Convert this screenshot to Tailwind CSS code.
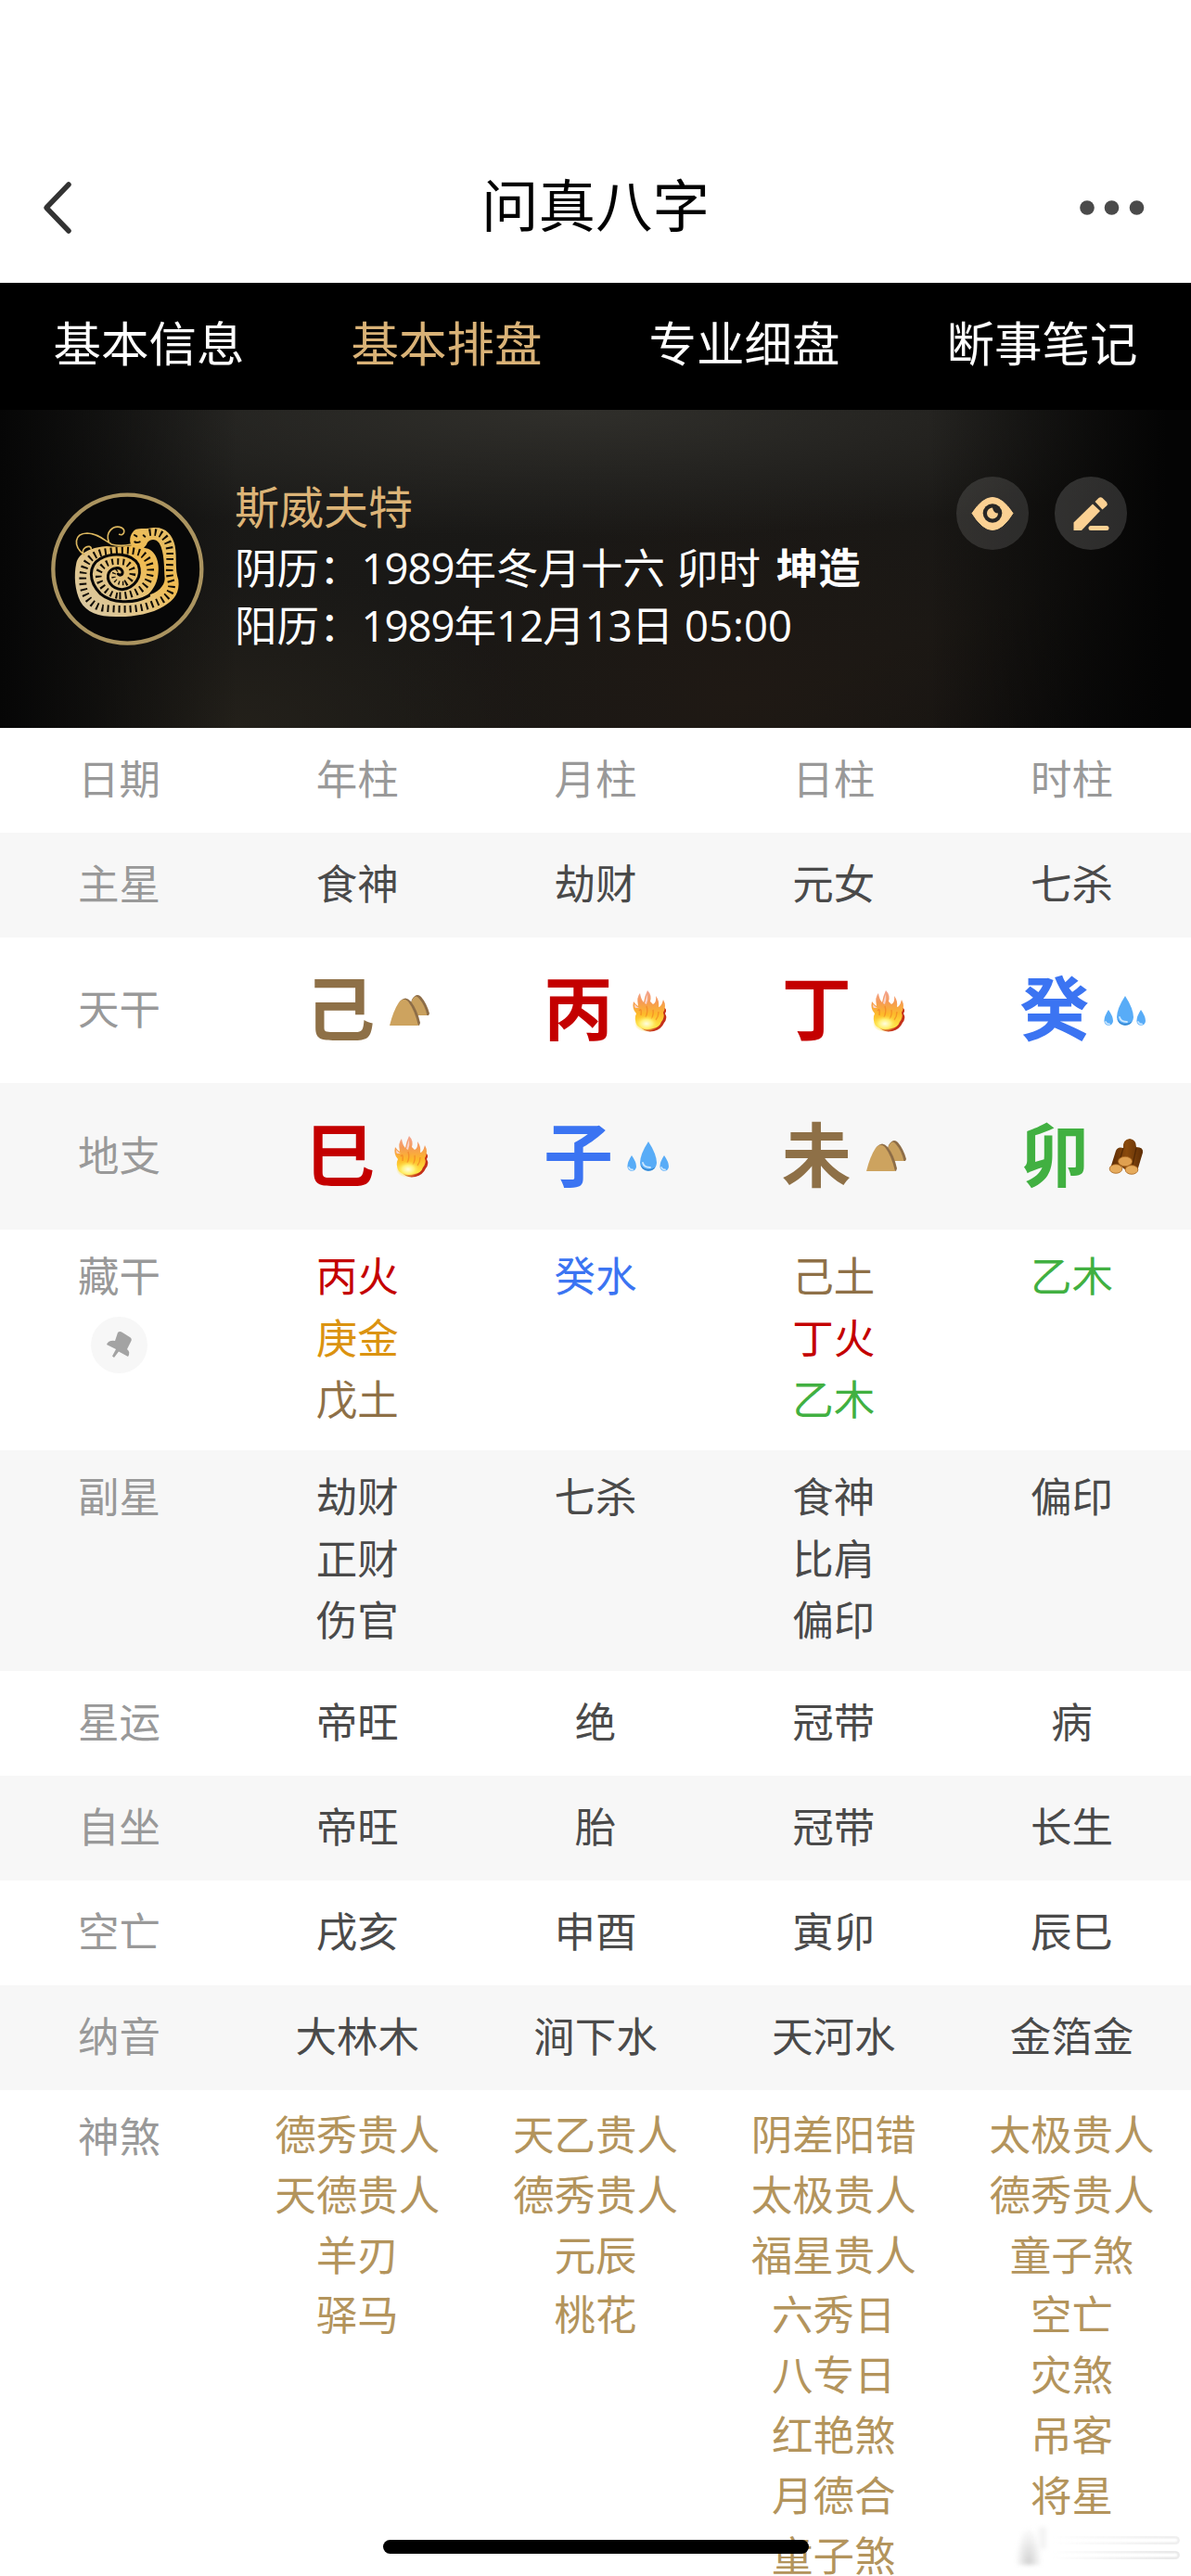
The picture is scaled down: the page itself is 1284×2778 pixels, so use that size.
<!DOCTYPE html>
<html lang="zh-CN">
<head>
  <meta charset="UTF-8" />
  <meta name="viewport" content="width=device-width, initial-scale=1.0" />
  <title>问真八字</title>
  <script src="https://cdn.jsdelivr.net/npm/@tailwindcss/browser@4"></script>
</head>
<body class="bg-white">
  <!-- shared icons -->
  <svg class="absolute w-0 h-0">
    <defs>
      <linearGradient id="flame" x1="0" y1="0" x2="0" y2="1">
        <stop offset="0" stop-color="#f3a596" />
        <stop offset="0.3" stop-color="#f59a55" />
        <stop offset="0.6" stop-color="#fdb92a" />
        <stop offset="1" stop-color="#fff04a" />
      </linearGradient>
      <radialGradient id="glow">
        <stop offset="0" stop-color="#fffde0" />
        <stop offset="0.5" stop-color="#fff27a" />
        <stop offset="1" stop-color="#ffd83a" stop-opacity="0" />
      </radialGradient>
      <linearGradient id="bark" x1="0" y1="0" x2="1" y2="0">
        <stop offset="0" stop-color="#5a2b05" />
        <stop offset="0.5" stop-color="#8a4a0c" />
        <stop offset="1" stop-color="#5e2e06" />
      </linearGradient>
      <symbol id="earth" viewBox="0 0 48 48">
        <path d="M22 29L26 12Q31 4 36 9Q42 16 45 27L44 29Z" fill="#8d6d47" />
        <path d="M22 29L26 13Q30 5 34 11Q40 18 42.500 29Z" fill="#c8a05e" />
        <path d="M8 30L13 14Q19 7 25 14Q32 23 35 37L34 40Z" fill="#8d6d47" />
        <path d="M2 40Q6 24 12 15Q17 9 22 14Q29 23 33 40Z" fill="#cda35f" />
      </symbol>
      <symbol id="fire" viewBox="0 0 48 48">
        <path d="M15 41Q11 38 12 33L40 20Q45 22 42 27Q45 32 41 37Q38 44 30 46Q20 48 15 41Z" fill="#c4301a" />
        <path d="M12 40Q8 33 11 27Q6 22 8 14Q10 17 13 19Q11 9 15 5Q16 12 19 15Q20 8 23 2Q28 7 26 14L29 17Q33 15 32 8Q36 13 35 20Q38 20 40 12Q44 19 40 26Q42 31 38 36Q36 42 29 43Q19 46 12 40Z" fill="url(#flame)" />
        <path d="M14 24Q17 20 16 29M22 19Q24 25 21 31M29 23Q30 28 27 33M35 25Q35 30 32 34" fill="none" stroke="#f07a22" stroke-width="1.4" opacity="0.6" />
        <ellipse cx="22" cy="38" rx="13" ry="9" fill="url(#glow)" />
        <path d="M20 16Q21 11 23 6Q24 12 22 17ZM10 21Q9 20 9 17Q12 20 14 21Z" fill="#f9d3cb" />
      </symbol>
      <symbol id="water" viewBox="0 0 48 48">
        <path d="M24 8Q33 22 33 31A9 9 0 0 1 15 31Q15 22 24 8Z" fill="#58acf7" />
        <path d="M6 23Q11 30 11 35A4.8 4.8 0 0 1 1.4 35Q1.4 30 6 23Z" fill="#58acf7" />
        <path d="M41 23Q46 30 46 35A4.8 4.8 0 0 1 36.4 35Q36.4 30 41 23Z" fill="#58acf7" />
        <path d="M15.5 33A9 9 0 0 0 32 35Q29 38 24 38T15.5 33Z" fill="#3687cf" />
        <path d="M18 31Q19 36 26 36M3 36Q4 38.4 7 38.4M38 36Q39 38.4 42 38.4" fill="none" stroke="#c9e6ff" stroke-width="1.8" stroke-linecap="round" />
      </symbol>
      <symbol id="wood" viewBox="0 0 48 48">
        <path d="M22 15Q21 6 29 5Q36 6 36 14Q44 14 43 20L37 40Q26 42 20 35L8 37L14 18Q16 13 22 15Z" fill="url(#bark)" />
        <path d="M22 15L17 32M36 15L32 33" stroke="#3c1b02" stroke-width="1.2" opacity="0.6" />
        <ellipse cx="24" cy="29.5" rx="7.5" ry="5.2" fill="#e0a050" stroke="#a8661f" stroke-width="0.8" />
        <ellipse cx="14" cy="37.5" rx="6.8" ry="4.8" fill="#e6ab5c" stroke="#a8661f" stroke-width="0.8" />
        <ellipse cx="31" cy="38.5" rx="6.8" ry="4.8" fill="#e6ab5c" stroke="#a8661f" stroke-width="0.8" />
      </symbol>
    </defs>
  </svg>

  <div class="relative w-[1284px] h-[2778px] overflow-hidden bg-white font-['Noto_Sans_CJK_SC',sans-serif]">
    <!-- title bar -->
    <header class="h-[305px] pt-[142px]">
      <div class="h-[163px] px-[44px] flex items-center justify-between">
        <svg class="w-[60px] h-[60px]" viewBox="0 0 60 60" fill="none" stroke="#333" stroke-width="5.500" stroke-linecap="round" stroke-linejoin="round">
          <path d="M30 5L6 30L30 55" />
        </svg>
        <h1 class="text-[61.5px] leading-[80px] -mt-[10px] pl-[18px] text-black">问真八字</h1>
        <svg class="w-[72px] h-[20px] mr-[6px]" viewBox="0 0 72 20" fill="#4a4a4a">
          <circle cx="10" cy="10" r="7.8" />
          <circle cx="36.5" cy="10" r="7.8" />
          <circle cx="63.5" cy="10" r="7.8" />
        </svg>
      </div>
    </header>

    <!-- tabs -->
    <nav class="h-[137px] pb-[12px] bg-black grid grid-cols-4 items-center text-center text-[51.5px] leading-[70px] text-white">
      <a>基本信息</a>
      <a class="text-[#d9b277]">基本排盘</a>
      <a>专业细盘</a>
      <a>断事笔记</a>
    </nav>

    <!-- profile card -->
    <section class="h-[343px] flex items-start bg-[#0d0c0b] bg-[linear-gradient(90deg,#060606_0%,transparent_20%,transparent_78%,#040404_98%),radial-gradient(ellipse_60%_40%_at_48%_0%,#302f2b_0%,transparent_100%),radial-gradient(ellipse_30%_70%_at_62%_90%,#1f1914_0%,transparent_100%),radial-gradient(ellipse_25%_50%_at_20%_100%,#23201a_0%,transparent_100%),linear-gradient(160deg,#1a1a18_0%,#191816_45%,#191714_75%,#100f0e_100%)]">
      <svg class="w-[165px] h-[165px] ml-[55px] mt-[89px]" viewBox="75 62 495 495" fill="none">
        <defs>
          <linearGradient id="gold" x1="0" y1="0.9" x2="0.9" y2="0.1">
            <stop offset="0" stop-color="#d9c8a4" />
            <stop offset="0.4" stop-color="#e2c587" />
            <stop offset="0.7" stop-color="#f0bb50" />
            <stop offset="1" stop-color="#e6bd64" />
          </linearGradient>
        </defs>
        <circle cx="322" cy="310" r="240" fill="#070707" stroke="#ab9460" stroke-width="13" />
        <path d="M157 290C165 255 215 238 255 236Q295 240 335 234C325 215 333 190 350 181C368 176 385 182 400 177C440 170 468 195 476 235C483 275 475 310 487 345C492 385 475 410 440 430C400 455 340 465 290 464C230 465 190 450 170 415C152 380 148 330 157 290Z" fill="url(#gold)" />
        <path d="M375 241C415 245 428 290 421 330C417 360 400 385 384 396C420 388 442 365 443 342C440 300 442 255 425 226C412 210 396 214 387 224Q383 236 375 241Z" fill="#070707" />
        <path d="M392 396C340 425 270 420 235 390C195 350 195 300 235 276C275 255 335 258 357 295C372 335 345 372 305 376C270 374 252 345 262 322C272 303 300 302 306 318C308 330 298 332 292 326" stroke="#070707" stroke-width="9" stroke-linecap="round" />
        <g stroke="#100c06" stroke-width="23" stroke-dasharray="6 12">
          <path d="M392 192C430 185 455 210 459 250C462 300 452 320 465 355C468 395 440 410 400 425C350 445 290 440 240 436C195 425 178 385 178 350C175 300 195 268 240 256C280 250 330 244 365 258C400 280 405 320 385 355C365 385 325 398 290 396" />
          <path d="M290 396C250 390 222 350 230 320C245 285 280 282 315 288C350 305 345 345 310 358" stroke-width="20" />
          <path d="M310 356C275 358 268 325 290 312" stroke-width="13" stroke-dasharray="4 9" />
        </g>
        <path d="M182 264C145 235 150 195 192 194C225 195 245 215 268 228M182 264C165 245 205 225 205 246M262 222C250 190 275 170 297 174C320 180 312 205 296 198M270 230Q300 238 335 230" stroke="#dcb75f" stroke-width="5" stroke-linecap="round" />
        <path d="M345 200L352 204M374 201L379 205M346 222Q352 226 362 222" stroke="#100c06" stroke-width="6" stroke-linecap="round" />
      </svg>
      <div class="ml-[33px] mt-[71px] flex-1 text-[45.5px] leading-[63px] text-white whitespace-nowrap">
        <p class="mb-[3px] h-[63px] text-[48px] text-[#dcb477]">斯威夫特</p>
        <p class="h-[62px]">阴历：<span class="font-['Open_Sans'] tracking-[-1px]">1989</span>年冬月十六<span class="font-['Open_Sans']"> </span>卯时<span class="font-['Open_Sans']"> </span><b class="ml-[5px]">坤造</b></p>
        <p class="h-[63px]">阳历：<span class="font-['Open_Sans'] tracking-[-1px]">1989</span>年<span class="font-['Open_Sans'] tracking-[-1px]">12</span>月<span class="font-['Open_Sans'] tracking-[-1px]">13</span>日<span class="font-['Open_Sans']"> 05:00</span></p>
      </div>
      <div class="mt-[72px] mr-[69px] flex gap-[28px]">
        <svg class="w-[78px] h-[79px] rounded-full bg-white/12" viewBox="0 0 78 78">
          <path d="M17 39Q28 22 39 22T61 39Q50 57 39 57T17 39Z" fill="#fbd193" stroke="#fbd193" stroke-linejoin="round" />
          <circle cx="39" cy="39" r="10.3" fill="#282725" />
          <path d="M39 33A6 6 0 1 0 45 39Q40 39 39 33Z" fill="#fbd193" />
        </svg>
        <svg class="w-[78px] h-[79px] rounded-full bg-white/15" viewBox="0 0 78 78" fill="#fbd193">
          <path d="M20.500 57.500V49L41 29L49 36.500L29 57.500Z" />
          <path d="M43.500 26.500L47.500 22.500Q49.500 21 51.500 22.500L56 27Q57.500 29 56 31L51.500 35Z" />
          <rect x="36.500" y="52.500" width="22" height="5" rx="2.500" />
        </svg>
      </div>
    </section>

    <!-- chart table -->
    <main class="text-[44.5px] leading-[66.5px] text-center text-[#4a4a4a]">
      <div class="h-[113px] pb-[6px] grid grid-cols-5 items-center text-[#999]">
        <div>日期</div><div>年柱</div><div>月柱</div><div>日柱</div><div>时柱</div>
      </div>
      <div class="h-[113px] pb-[6px] grid grid-cols-5 items-center bg-[#f7f7f7]">
        <div class="text-[#999]">主星</div><div>食神</div><div>劫财</div><div>元女</div><div>七杀</div>
      </div>

      <div class="h-[157px] grid grid-cols-5 items-center">
        <div class="pb-[6px] text-[#999]">天干</div>
        <div class="flex items-center justify-center gap-[14px] pl-[25px]"><b class="-mt-[11px] text-[75px] leading-[100px] text-[#8e7047]">己</b><svg class="w-[48px] h-[48px]"><use href="#earth" /></svg></div>
        <div class="flex items-center justify-center gap-[14px] pl-[25px]"><b class="-mt-[11px] text-[75px] leading-[100px] text-[#c40000]">丙</b><svg class="w-[48px] h-[48px]"><use href="#fire" /></svg></div>
        <div class="flex items-center justify-center gap-[14px] pl-[25px]"><b class="-mt-[11px] text-[75px] leading-[100px] text-[#c40000]">丁</b><svg class="w-[48px] h-[48px]"><use href="#fire" /></svg></div>
        <div class="flex items-center justify-center gap-[14px] pl-[25px]"><b class="-mt-[11px] text-[75px] leading-[100px] text-[#3b74f2]">癸</b><svg class="w-[48px] h-[48px]"><use href="#water" /></svg></div>
      </div>
      <div class="h-[158px] grid grid-cols-5 items-center bg-[#f7f7f7]">
        <div class="pb-[6px] text-[#999]">地支</div>
        <div class="flex items-center justify-center gap-[14px] pl-[25px]"><b class="-mt-[11px] text-[75px] leading-[100px] text-[#c40000]">巳</b><svg class="w-[48px] h-[48px]"><use href="#fire" /></svg></div>
        <div class="flex items-center justify-center gap-[14px] pl-[25px]"><b class="-mt-[11px] text-[75px] leading-[100px] text-[#3b74f2]">子</b><svg class="w-[48px] h-[48px]"><use href="#water" /></svg></div>
        <div class="flex items-center justify-center gap-[14px] pl-[25px]"><b class="-mt-[11px] text-[75px] leading-[100px] text-[#8e7047]">未</b><svg class="w-[48px] h-[48px]"><use href="#earth" /></svg></div>
        <div class="flex items-center justify-center gap-[14px] pl-[25px]"><b class="-mt-[11px] text-[75px] leading-[100px] text-[#41b041]">卯</b><svg class="w-[48px] h-[48px]"><use href="#wood" /></svg></div>
      </div>

      <div class="h-[238px] pt-[15px] grid grid-cols-5 items-start">
        <div class="text-[#999]">
          <p>藏干</p>
          <svg class="mx-auto mt-[12px] w-[61px] h-[61px] rounded-full bg-[#f7f7f7]" viewBox="0 0 61 61" fill="#a3a3a3">
            <path d="M29 17Q31 15 34 17L42 22Q45 24 43 27L39 35Q43 38 40 43L30 37.500L25 44L23 42.500L27 35L17 30Q19 25 26 26Z" />
          </svg>
        </div>
        <div><p class="text-[#c40000]">丙火</p><p class="text-[#db9310]">庚金</p><p class="text-[#8e7047]">戊土</p></div>
        <div><p class="text-[#3b74f2]">癸水</p></div>
        <div><p class="text-[#8e7047]">己土</p><p class="text-[#c40000]">丁火</p><p class="text-[#41b041]">乙木</p></div>
        <div><p class="text-[#41b041]">乙木</p></div>
      </div>
      <div class="h-[238px] pt-[15px] grid grid-cols-5 items-start bg-[#f7f7f7]">
        <div class="text-[#999]">副星</div>
        <div><p>劫财</p><p>正财</p><p>伤官</p></div>
        <div><p>七杀</p></div>
        <div><p>食神</p><p>比肩</p><p>偏印</p></div>
        <div><p>偏印</p></div>
      </div>

      <div class="h-[113px] pb-[6px] grid grid-cols-5 items-center">
        <div class="text-[#999]">星运</div><div>帝旺</div><div>绝</div><div>冠带</div><div>病</div>
      </div>
      <div class="h-[113px] pb-[6px] grid grid-cols-5 items-center bg-[#f7f7f7]">
        <div class="text-[#999]">自坐</div><div>帝旺</div><div>胎</div><div>冠带</div><div>长生</div>
      </div>
      <div class="h-[113px] pb-[6px] grid grid-cols-5 items-center">
        <div class="text-[#999]">空亡</div><div>戌亥</div><div>申酉</div><div>寅卯</div><div>辰巳</div>
      </div>
      <div class="h-[113px] pb-[6px] grid grid-cols-5 items-center bg-[#f7f7f7]">
        <div class="text-[#999]">纳音</div><div>大林木</div><div>涧下水</div><div>天河水</div><div>金箔金</div>
      </div>

      <div class="pt-[14px] grid grid-cols-5 items-start leading-[64.8px] text-[#b3945c]">
        <div class="pt-[2px] text-[#999]">神煞</div>
        <div><p>德秀贵人</p><p>天德贵人</p><p>羊刃</p><p>驿马</p></div>
        <div><p>天乙贵人</p><p>德秀贵人</p><p>元辰</p><p>桃花</p></div>
        <div><p>阴差阳错</p><p>太极贵人</p><p>福星贵人</p><p>六秀日</p><p>八专日</p><p>红艳煞</p><p>月德合</p><p>童子煞</p></div>
        <div><p>太极贵人</p><p>德秀贵人</p><p>童子煞</p><p>空亡</p><p>灾煞</p><p>吊客</p><p>将星</p></div>
      </div>
    </main>

    <!-- smudge in the corner -->
    <div class="absolute left-[1094px] top-[2724px] w-[30px] h-[42px] blur-[2px] bg-[radial-gradient(ellipse_at_50%_100%,#cfcfcf,transparent_68%)]"></div>
    <div class="absolute left-[1120px] top-[2725px] w-[8px] h-[24px] blur-[2px] bg-[#f3f3f3]"></div>
    <div class="absolute left-[1134px] top-[2735px] w-[138px] h-[9px] rounded-r-full border-y-2 border-r-2 border-[#e4e4e4] blur-[1px] mask-l-from-10% mask-l-to-100%"></div>
    <div class="absolute left-[1134px] top-[2751px] w-[138px] h-[9px] rounded-r-full border-y-2 border-r-2 border-[#dcdcdc] blur-[1px] mask-l-from-10% mask-l-to-100%"></div>

    <!-- home indicator -->
    <div class="absolute left-[413px] top-[2739px] w-[459px] h-[15px] rounded-full bg-black"></div>
  </div>
</body>
</html>
